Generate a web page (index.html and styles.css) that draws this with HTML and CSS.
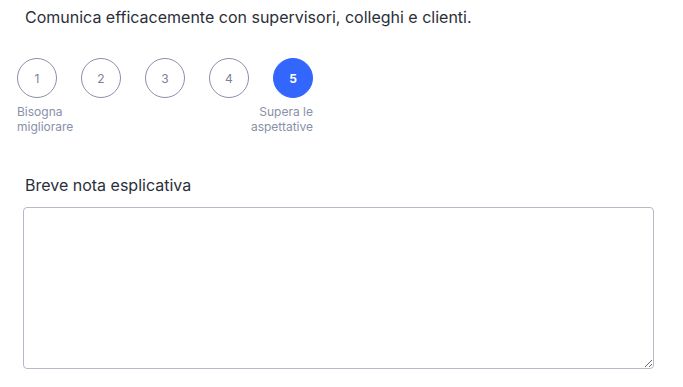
FILE: index.html
```html
<!DOCTYPE html>
<html lang="it">
<head>
<meta charset="utf-8">
<link rel="stylesheet" href="styles.css">
</head>
<body>
<div class="page">
  <p class="question">Comunica efficacemente con supervisori, colleghi e clienti.</p>
  <div class="scale">
    <div class="options">
      <button class="opt">1</button>
      <button class="opt">2</button>
      <button class="opt">3</button>
      <button class="opt">4</button>
      <button class="opt active">5</button>
    </div>
    <div class="labels">
      <span class="lab-left">Bisogna<br>migliorare</span>
      <span class="lab-right">Supera le<br>aspettative</span>
    </div>
  </div>
  <label class="note-label">Breve nota esplicativa</label>
  <textarea class="note"></textarea>
</div>
</body>
</html>
```
FILE: styles.css
```css
* { box-sizing: border-box; }
html, body { margin: 0; background: #fff; }
body { font-family: Inter, "Noto Sans", sans-serif; }
.page { padding: 0 0 0 17px; width: 654px; }
.question { margin: 0; padding: 7px 0 0 8px; font-size: 16px; line-height: 20px; color: #2b2f3a; }
.scale { margin-top: 31px; width: 296px; }
.options { display: flex; gap: 24px; }
.opt {
  width: 40px; height: 40px; border-radius: 50%;
  border: 1px solid #8990a8; background: #fff;
  font-family: Inter, sans-serif; font-size: 12px; color: #7a8097;
  padding: 0; display: flex; align-items: center; justify-content: center;
}
.opt.active { background: #3266fd; border-color: #3266fd; color: #fff; font-weight: 700; }
.labels { display: flex; justify-content: space-between; margin-top: 6px; font-size: 12px; line-height: 15px; color: #8990a8; }
.lab-right { text-align: right; }
.note-label { display: block; margin: 41px 0 0 8px; font-size: 16px; line-height: 20px; color: #2b2f3a; }
.note {
  display: block; margin: 12px 0 0 6px; width: 631px; height: 162px;
  border: 1px solid #b8b9c6; border-radius: 4px; resize: vertical; font-family: Inter, sans-serif;
}
```
